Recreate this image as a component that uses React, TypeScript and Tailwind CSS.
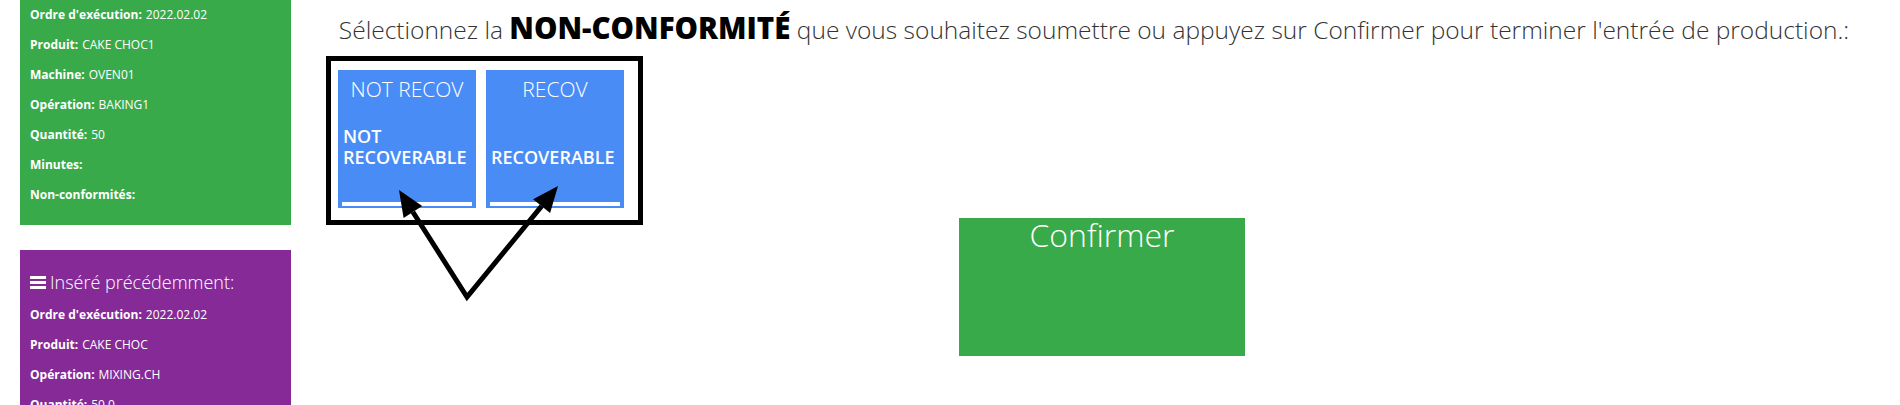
import { type ReactNode } from "react";

const font = { fontFamily: '"Open Sans", "Liberation Sans", sans-serif' };

function InfoRow({ label, value }: { label: string; value?: string }) {
  return (
    <div className="flex h-[30px] items-center text-[12px] text-white">
      <span className="font-bold">{label}:</span>
      {value && <span className="ml-[4px]">{value}</span>}
    </div>
  );
}

function Panel({ className, children }: { className: string; children: ReactNode }) {
  return <div className={`w-[271px] px-[10px] ${className}`}>{children}</div>;
}

function Tile({ title, lines }: { title: string; lines: string[] }) {
  return (
    <div className="flex h-[138px] w-[138px] flex-col bg-[#4a8cf6] text-white">
      <div className="flex h-[40px] items-center justify-center text-[21px] font-light">
        {title}
      </div>
      <div className="flex h-[58px] flex-col justify-end px-[5px] text-[18px] font-semibold leading-[21px]">
        {lines.map((l) => (
          <span key={l}>{l}</span>
        ))}
      </div>
      <div className="flex-1" />
      <div className="mx-[4px] mb-[2px] h-[4px] bg-white" />
    </div>
  );
}

export default function App() {
  return (
    <div className="relative h-[405px] w-[1900px] overflow-hidden bg-white" style={font}>
      <div className="flex">
        {/* sidebar */}
        <div className="w-[291px] shrink-0 pl-[20px]">
          <Panel className="bg-[#39aa4a] pb-[15px]">
            <InfoRow label="Ordre d'exécution" value="2022.02.02" />
            <InfoRow label="Produit" value="CAKE CHOC1" />
            <InfoRow label="Machine" value="OVEN01" />
            <InfoRow label="Opération" value="BAKING1" />
            <InfoRow label="Quantité" value="50" />
            <InfoRow label="Minutes" />
            <InfoRow label="Non-conformités" />
          </Panel>
          <Panel className="mt-[25px] bg-[#852a97] pb-[20px]">
            <div className="flex h-[50px] items-start pt-[18px]">
              <div className="flex h-[28px] items-center gap-[4px] text-[18px] font-light leading-[28px] text-white">
                <svg width="16" height="13" viewBox="0 0 16 13" className="shrink-0">
                  <rect x="0" y="0" width="16" height="3" fill="white" />
                  <rect x="0" y="5" width="16" height="3" fill="white" />
                  <rect x="0" y="10" width="16" height="3" fill="white" />
                </svg>
                <span>Inséré précédemment:</span>
              </div>
            </div>
            <InfoRow label="Ordre d'exécution" value="2022.02.02" />
            <InfoRow label="Produit" value="CAKE CHOC" />
            <InfoRow label="Opération" value="MIXING.CH" />
            <InfoRow label="Quantité" value="50.0" />
          </Panel>
        </div>

        {/* main */}
        <div className="ml-[32px] mr-[19px] flex-1">
          <h1 className="flex h-[60px] items-center justify-center pb-[2px] pr-[16px] text-[24.5px] font-light leading-[34px] text-[#333]">
            <span>
              Sélectionnez la{" "}
              <b className="text-[29.5px] font-extrabold text-black">NON-CONFORMITÉ</b> que vous
              souhaitez soumettre ou appuyez sur Confirmer pour terminer l'entrée de production.:
            </span>
          </h1>
          <div className="mt-[10px] flex gap-[10px] pl-[15px]">
            <Tile title="NOT RECOV" lines={["NOT", "RECOVERABLE"]} />
            <Tile title="RECOV" lines={["RECOVERABLE"]} />
          </div>
          <div className="mt-[10px] flex justify-center">
            <button className="flex h-[138px] w-[286px] items-start justify-center bg-[#39aa4a] pt-[1px] text-[32px] font-light leading-[32px] text-white">
              Confirmer
            </button>
          </div>
        </div>
      </div>

      {/* annotation overlay */}
      <div className="pointer-events-none absolute left-[326px] top-[56px] h-[169px] w-[317px] border-[5px] border-black" />
      <svg
        className="pointer-events-none absolute left-0 top-0"
        width="1900"
        height="405"
        viewBox="0 0 1900 405"
      >
        <polyline
          points="412.9,212 467,297 541.6,206.2"
          fill="none"
          stroke="black"
          strokeWidth="5"
          strokeLinejoin="miter"
        />
        <polygon points="399,190 422.2,206.1 403.6,217.9" fill="black" />
        <polygon points="558,186 550.1,213.1 533.1,199.3" fill="black" />
      </svg>
    </div>
  );
}
